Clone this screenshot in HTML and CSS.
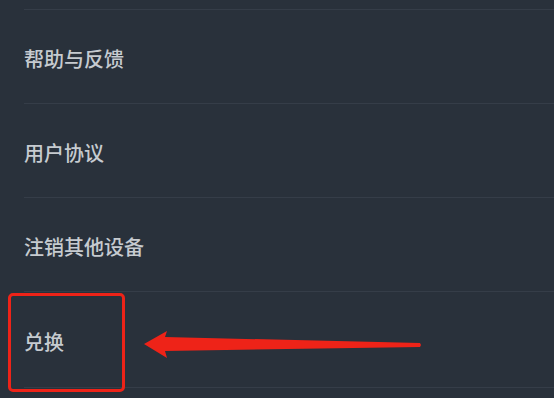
FILE: index.html
```html
<!DOCTYPE html>
<html lang="zh-CN">
<head>
  <meta charset="UTF-8">
  <meta name="viewport" content="width=device-width, initial-scale=1.0">
  <title>设置</title>
  <link rel="stylesheet" href="styles.css">
</head>
<body>
  <div class="list">
    <div class="row">帮助与反馈</div>
    <div class="row">用户协议</div>
    <div class="row">注销其他设备</div>
    <div class="row last">
      兑换
      <div class="mark"></div>
      <svg class="arrow" width="420" height="80" viewBox="0 0 420 80">
        <polygon points="120,52 143,39 141,45 396,51 397,53 396,55 141,59 143,66" fill="#ee2318"/>
      </svg>
    </div>
  </div>
</body>
</html>
```

FILE: styles.css
```css
html, body {
  height: 100%;
}

body {
  margin: 0;
  background: #29313b;
  font-family: "Noto Sans CJK SC", "Noto Sans", sans-serif;
  color: #c6cbd0;
}

.list {
  padding-top: 9px;
}

.row {
  position: relative;
  margin-left: 24px;
  height: 94px;
  border-top: 1px solid #353d48;
  display: flex;
  align-items: center;
  font-size: 20px;
  font-weight: 500;
  padding-top: 3px;
  box-sizing: border-box;
}

.row.last {
  height: 97px;
  border-bottom: 1px solid #353d48;
}

.mark {
  position: absolute;
  left: -16px;
  top: 1px;
  width: 117px;
  height: 99px;
  border: 3px solid #ee2318;
  border-radius: 5px;
  box-sizing: border-box;
}

.arrow {
  position: absolute;
  left: 0;
  top: 0;
  overflow: visible;
}
```
